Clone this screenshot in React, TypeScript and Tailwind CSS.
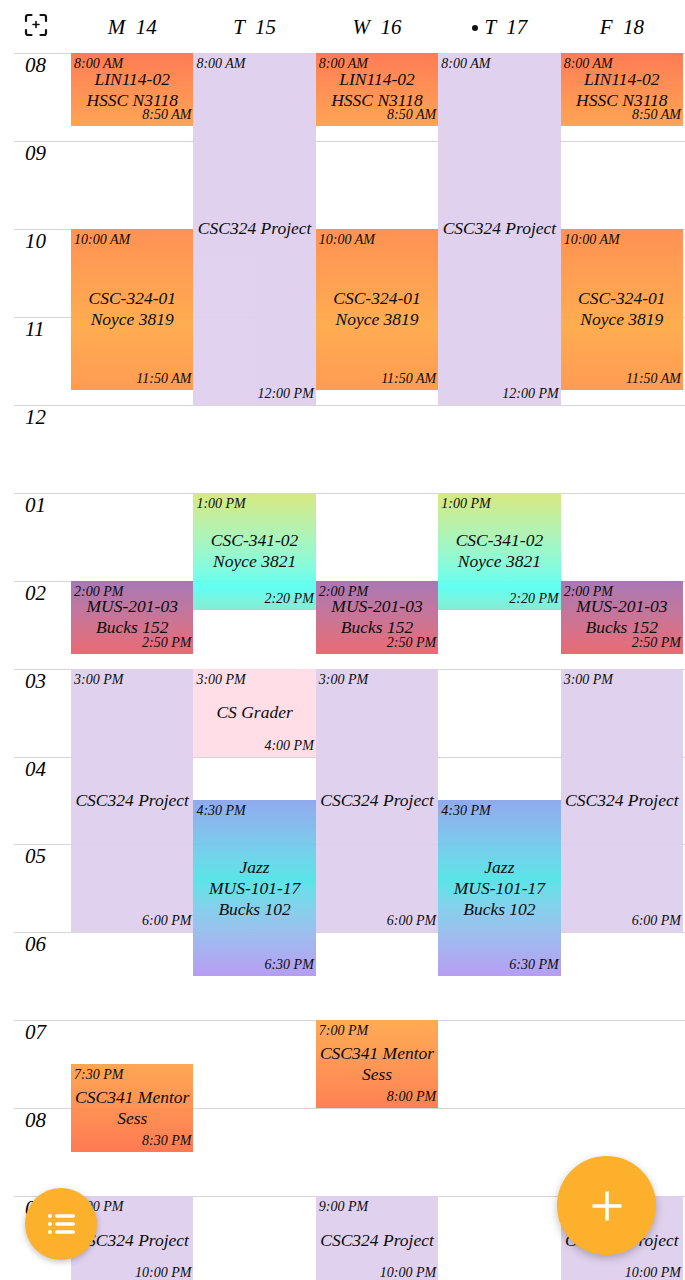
const HOUR = 87.94;
const START = 8 * 60;

const hours = ["08", "09", "10", "11", "12", "01", "02", "03", "04", "05", "06", "07", "08", "09"];

const styles = {
    lin: "bg-gradient-to-b from-[#ff754c] to-[#ffa04c]",
    csc324: "bg-gradient-to-b from-[#ff8c4b] via-[#ffa948] via-[60%] to-[#ff964a]",
    project: "bg-[#dfd0ee]",
    csc341: "bg-gradient-to-b from-[#d5e878] via-[#58fff2] via-[80%] to-[#80ecd0]",
    mus: "bg-gradient-to-b from-[#a372b2] to-[#e9636c]",
    grader: "bg-[#ffdde6]",
    jazz: "bg-gradient-to-b from-[#8ba5ee] via-[#50e4e6] via-[45%] to-[#b398f3]",
    mentorA: "bg-gradient-to-b from-[#ffa24c] to-[#ff744a]",
    mentorB: "bg-gradient-to-b from-[#ffa84a] to-[#ff7a4c]",
};

type Ev = {
    start: number;
    end: number;
    from: string;
    to: string;
    lines: string[];
    style: keyof typeof styles;
};

const t = (h: number, m = 0) => h * 60 + m;

const lin: Ev = { start: t(8), end: t(8, 50), from: "8:00 AM", to: "8:50 AM", lines: ["LIN114-02", "HSSC N3118"], style: "lin" };
const csc324: Ev = { start: t(10), end: t(11, 50), from: "10:00 AM", to: "11:50 AM", lines: ["CSC-324-01", "Noyce 3819"], style: "csc324" };
const mus: Ev = { start: t(14), end: t(14, 50), from: "2:00 PM", to: "2:50 PM", lines: ["MUS-201-03", "Bucks 152"], style: "mus" };
const afternoon: Ev = { start: t(15), end: t(18), from: "3:00 PM", to: "6:00 PM", lines: ["CSC324 Project"], style: "project" };
const night: Ev = { start: t(21), end: t(22), from: "9:00 PM", to: "10:00 PM", lines: ["CSC324 Project"], style: "project" };
const morning: Ev = { start: t(8), end: t(12), from: "8:00 AM", to: "12:00 PM", lines: ["CSC324 Project"], style: "project" };
const csc341: Ev = { start: t(13), end: t(14, 20), from: "1:00 PM", to: "2:20 PM", lines: ["CSC-341-02", "Noyce 3821"], style: "csc341" };
const grader: Ev = { start: t(15), end: t(16), from: "3:00 PM", to: "4:00 PM", lines: ["CS Grader"], style: "grader" };
const jazz: Ev = { start: t(16, 30), end: t(18, 30), from: "4:30 PM", to: "6:30 PM", lines: ["Jazz", "MUS-101-17", "Bucks 102"], style: "jazz" };

const days: { label: string; today?: boolean; events: Ev[] }[] = [
    {
        label: "M 14",
        events: [lin, csc324, mus, afternoon,
            { start: t(19, 30), end: t(20, 30), from: "7:30 PM", to: "8:30 PM", lines: ["CSC341 Mentor", "Sess"], style: "mentorA" },
            night],
    },
    { label: "T 15", events: [morning, csc341, grader, jazz] },
    {
        label: "W 16",
        events: [lin, csc324, mus, afternoon,
            { start: t(19), end: t(20), from: "7:00 PM", to: "8:00 PM", lines: ["CSC341 Mentor", "Sess"], style: "mentorB" },
            night],
    },
    { label: "T 17", today: true, events: [morning, csc341, jazz] },
    { label: "F 18", events: [lin, csc324, mus, afternoon, night] },
];

const hand = "font-['Liberation_Serif',serif] italic text-black";

const ScanPlusIcon = () => (
    <svg width="24" height="24" viewBox="0 0 24 24" fill="none" stroke="#111" strokeWidth="2.2" strokeLinecap="round" strokeLinejoin="round">
        <path d="M2 8V4a2 2 0 0 1 2-2h3.500" />
        <path d="M16.500 2H20a2 2 0 0 1 2 2v4" />
        <path d="M22 17v3a2 2 0 0 1-2 2h-3.500" />
        <path d="M7.500 22H4a2 2 0 0 1-2-2v-3" />
        <path d="M12 8.500v6M9 11.500h6" strokeWidth="1.600" />
    </svg>
);

const EventCard = ({ ev, prevEnd }: { ev: Ev; prevEnd: number }) => (
    <div
        className={`relative flex flex-col items-center justify-center gap-[4px] shrink-0 opacity-95 ${styles[ev.style]}`}
        style={{
            marginTop: ((ev.start - prevEnd) / 60) * HOUR,
            height: ((ev.end - ev.start) / 60) * HOUR,
        }}
    >
        <span className="absolute left-[3px] top-[4px] text-[14px] leading-[13px] whitespace-nowrap">{ev.from}</span>
        {ev.lines.map((line) => (
            <span key={line} className="text-[17.500px] leading-[17px] whitespace-nowrap">{line}</span>
        ))}
        <span className="absolute right-[2px] bottom-[5px] text-[14px] leading-[13px] whitespace-nowrap">{ev.to}</span>
    </div>
);

export default function App() {
    return (
        <div className={`relative h-[1280px] w-full overflow-hidden bg-white ${hand}`}>
            <header className="flex h-[53px] pr-[2px]">
                <div className="flex w-[71px] shrink-0 items-center pb-[4px] pl-[24px]">
                    <ScanPlusIcon />
                </div>
                {days.map((d) => (
                    <div key={d.label} className="flex flex-1 items-center justify-center gap-[7px] pt-[2px] text-[21px]">
                        {d.today && <span className="size-[6px] rounded-full bg-[#111]" />}
                        <span className="whitespace-pre">{d.label.replace(" ", "  ")}</span>
                    </div>
                ))}
            </header>

            <main className="relative ml-[14px]">
                {hours.map((h, i) => (
                    <div key={i} className="h-[87.940px] border-t border-[#d6d6d6] pl-[11px] text-[21px] leading-[22px]">
                        {h}
                    </div>
                ))}
                <div className="absolute inset-0 left-[57px] right-[2px] flex">
                    {days.map((d) => (
                        <div key={d.label} className="flex flex-1 flex-col">
                            {d.events.map((ev, i) => (
                                <EventCard key={i} ev={ev} prevEnd={i === 0 ? START : d.events[i - 1].end} />
                            ))}
                        </div>
                    ))}
                </div>
            </main>

            <button className="absolute left-[25px] top-[1188px] flex size-[72px] items-center justify-center rounded-full bg-[#fdb02b] shadow-[0_2px_6px_rgba(0,0,0,0.25)]">
                <svg width="27" height="22" viewBox="0 0 27 22" fill="white">
                    <circle cx="2" cy="3" r="2" />
                    <circle cx="2" cy="11" r="2" />
                    <circle cx="2" cy="19" r="2" />
                    <rect x="7" y="1.200" width="20" height="3.600" rx="1.800" />
                    <rect x="7" y="9.200" width="20" height="3.600" rx="1.800" />
                    <rect x="7" y="17.200" width="20" height="3.600" rx="1.800" />
                </svg>
            </button>
            <button className="absolute left-[557px] top-[1156px] flex size-[99px] items-center justify-center rounded-full bg-[#fdb02b] shadow-[0_3px_8px_rgba(0,0,0,0.25)]">
                <svg width="30" height="30" viewBox="0 0 30 30" fill="none" stroke="white" strokeWidth="3.500">
                    <path d="M15 0.500v29M0.500 15h29" />
                </svg>
            </button>
        </div>
    );
}
